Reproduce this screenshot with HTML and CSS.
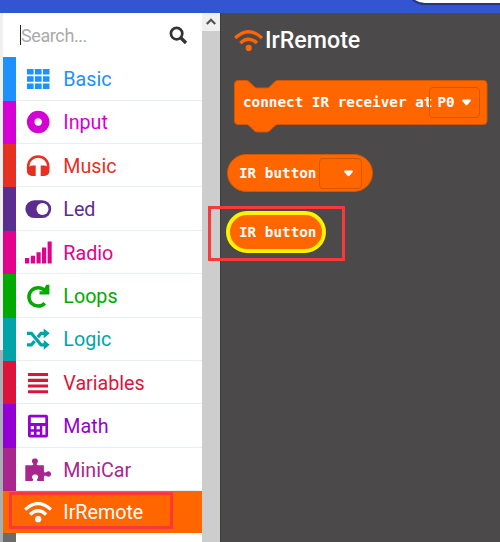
FILE: index.html
```html
<!DOCTYPE html>
<html lang="en">
<head>
<meta charset="utf-8">
<title>Blocks editor</title>
<link rel="stylesheet" href="styles.css">
</head>
<body>
<div class="app">
  <header class="topbar"><div class="pill"></div></header>
  <main class="editor">
    <div class="edge"></div>
    <nav class="toolbox">
      <div class="search">
        <span class="caret"></span><span class="placeholder">Search...</span>
        <svg class="search-icon" width="19" height="19" viewBox="0 0 19 19"><circle cx="7.6" cy="7.6" r="5.7" fill="none" stroke="#333" stroke-width="2.7"/><path d="M12 12l5 5" stroke="#333" stroke-width="3.4"/></svg>
      </div>
      <div class="row basic"><svg class="icon" viewBox="0 0 28 28"><path fill="currentColor" d="M3 4h6.6v5.5H3zM10.9 4h6.7v5.5h-6.7zM18.9 4h6.6v5.5h-6.6zM3 11.2h6.6v5.6H3zM10.9 11.2h6.7v5.6h-6.7zM18.9 11.2h6.6v5.6h-6.6zM3 18.5h6.6V24H3zM10.9 18.5h6.7V24h-6.7zM18.9 18.5h6.6V24h-6.6z"/></svg><span>Basic</span></div>
      <div class="row input"><svg class="icon" viewBox="0 0 28 28"><circle cx="14.2" cy="14" r="7.5" fill="none" stroke="currentColor" stroke-width="7.6"/></svg><span>Input</span></div>
      <div class="row music"><svg class="icon" viewBox="0 0 28 28"><path d="M4.1 17v-2.5a10.1 10.1 0 0 1 20.2 0V17" fill="none" stroke="currentColor" stroke-width="2.5"/><path fill="currentColor" d="M11.7 13.5v10.6H9.500c-4 0-6.600-2-6.600-5.300s2.600-5.300 6.600-5.300zM16.700 13.500v10.600h2.200c4 0 6.600-2 6.600-5.300s-2.600-5.300-6.600-5.300z"/></svg><span>Music</span></div>
      <div class="row led"><svg class="icon" viewBox="0 0 28 28"><rect x="1.4" y="5.2" width="25.8" height="17.8" rx="8.9" fill="currentColor"/><circle cx="18.5" cy="14.1" r="6" fill="#fff"/></svg><span>Led</span></div>
      <div class="row radio"><svg class="icon" viewBox="0 0 28 28"><path fill="currentColor" d="M1 19h4.2v5.5H1zM6.8 16.8H11v7.7H6.8zM12.5 13.3h4.2v11.2h-4.2zM18 8.500h4.200v16H18zM23.600 2.500h4.100v22h-4.100z"/></svg><span>Radio</span></div>
      <div class="row loops"><svg class="icon" viewBox="0 0 28 28"><path d="M20.7 8.4A9.2 9.2 0 1 0 20.8 21.2" fill="none" stroke="currentColor" stroke-width="3.5"/><path fill="currentColor" d="M22.2 2.7h3.2v9.7H15.5V9.2h3.3z"/></svg><span>Loops</span></div>
      <div class="row logic"><svg class="icon" viewBox="0 0 28 28"><path d="M3 8.3h4.400L17 19.800h4M3 19.800h4.400l3.200-3.800M13.800 12.100L17 8.300h4" fill="none" stroke="currentColor" stroke-width="3.2"/><path fill="currentColor" d="M19.700 3.500l6 4.800-6 4.900zM19.700 15l6 4.800-6 4.900z"/></svg><span>Logic</span></div>
      <div class="row variables"><svg class="icon" viewBox="0 0 28 28"><path fill="currentColor" d="M4 4h20v3.100H4zM4 9.800h20v3.100H4zM4 15.400h20v3.100H4zM4 21.200h20v3.100H4z"/></svg><span>Variables</span></div>
      <div class="row math"><svg class="icon" viewBox="0 0 28 28"><rect x="4" y="2.7" width="20" height="22.8" rx="2" fill="currentColor"/><path fill="#fff" d="M6.800 5.500h14.500v5.600H6.800zM6.800 14h3.100v3.200H6.800zM12.600 14h3.200v3.200h-3.200zM6.800 19.700h3.100v3.100H6.800zM12.600 19.700h3.200v3.100h-3.200zM18.300 14h3.100v8.800h-3.100z"/></svg><span>Math</span></div>
      <div class="row minicar"><svg class="icon" viewBox="0 0 28 28"><path fill="currentColor" d="M1.300 9.200h5.900c3.100 0 2.200-1.200 1.400-2.300C7 4.500 8.400 2.500 10.900 2.500s4 2 2.400 4.400c-.8 1.100-1.200 2.300 1.800 2.300h4.800v4.900c0 2.900 1 2.900 2.500 1.800 2.400-1.500 4.700-.1 4.700 2.100s-2.300 3.700-4.700 2.100c-1.500-1-2.500-.9-2.500 1.700V25h-6c-1.600-.5-.9-1.600-.2-2.600 1.400-2.300-.2-4-2.500-4s-4.200 1.700-2.700 4c.7 1 1.400 2.100-.2 2.600h-7z"/></svg><span>MiniCar</span></div>
      <div class="row irremote"><svg class="icon" viewBox="0 0 28 28"><path d="M1.2 11.6Q14 -.6 27 11.6M6.100 16.500Q14 8.900 22.200 16.500" fill="none" stroke="currentColor" stroke-width="3.3"/><circle cx="14.2" cy="21.2" r="3.100" fill="currentColor"/></svg><span>IrRemote</span><i class="callout row-callout"></i></div>
      <div class="row rest"></div>
    </nav>
    <div class="scrollbar"><div class="up"><svg width="18" height="18" viewBox="0 0 18 18"><path d="M4.800 11L9 6.800l4.200 4.200" fill="none" stroke="#555" stroke-width="2.3"/></svg></div></div>
    <section class="flyout">
      <h1 class="heading"><svg width="29" height="29" viewBox="0 0 28 28"><path d="M1.200 11.600Q14 -.6 27 11.600M6.100 16.500Q14 8.900 22.200 16.500" fill="none" stroke="currentColor" stroke-width="3.200"/><circle cx="14.200" cy="21.200" r="3" fill="currentColor"/></svg><span>IrRemote</span></h1>
      <div class="block statement">
        <svg class="shape" width="256" height="56" viewBox="0 0 256 56"><path d="M4 1.500H12c2 0 3 1 4 2l4 4c1 1 2 1.500 4 1.500H32c2 0 3-.5 4-1.500l4-4c1-1 2-2 4-2H249.500a3.500 3.500 0 0 1 3.500 3.500V42a3.500 3.500 0 0 1-3.500 3.500H44c-2 0-3 1-4 2l-4 4c-1 1-2 1.500-4 1.500H24c-2 0-3-.5-4-1.500l-4-4c-1-1-2-2-4-2H4A3.500 3.500 0 0 1 .5 42V5A3.500 3.500 0 0 1 4 1.500z" fill="#ff6600" stroke="#d65600"/></svg>
        <span class="code">connect IR receiver at</span>
        <span class="field port">P0<svg width="11" height="7" viewBox="0 0 11 7"><path d="M2 .5h7q1.600.2.7 1.500L6.300 6q-.8.700-1.600 0L1.300 2Q.4.700 2 .5z" fill="#fff"/></svg></span>
      </div>
      <div class="block reporter">
        <span class="code">IR button</span>
        <span class="field key"><svg width="11" height="7" viewBox="0 0 11 7"><path d="M2 .5h7q1.600.2.7 1.500L6.300 6q-.8.700-1.600 0L1.300 2Q.4.700 2 .5z" fill="#fff"/></svg></span>
      </div>
      <div class="block selected"><span class="code">IR button</span><i class="callout block-callout"></i></div>
    </section>
  </main>
</div>
</body>
</html>
```
FILE: styles.css
```css
* { box-sizing: border-box; }
body { margin: 0; font-family: Roboto, sans-serif; }
.app { width: 500px; height: 542px; overflow: hidden; display: flex; flex-direction: column; }
.topbar { height: 13px; background: #3454d1; display: flex; justify-content: flex-end; overflow: hidden; flex: none; }
.pill { width: 130px; height: 40px; margin: -35px -35px 0 0; border: 2px solid #22377f; border-radius: 20px; background: #fff; }
.editor { flex: 1; min-height: 0; display: grid; grid-template-columns: 3px 199px 18px 1fr; }
.edge { background: linear-gradient(#f0f0f0 337px, #a6afb3 337px); }
.toolbox { background: #fff; overflow: hidden; }
.search { height: 44.3px; display: flex; align-items: center; padding: 0 14px 0 17px; }
.caret { width: 1px; height: 20px; background: #222; }
.placeholder { color: #aaa; font-size: 18px; letter-spacing: -0.4px; flex: 1; }
.search-icon { margin-top: 1px; }
.row { position: relative; height: 43.4px; border-left: 13px solid var(--c); color: var(--c); display: flex; align-items: center; padding-left: 8px; font-size: 19.7px; background: linear-gradient(#e9eef0, #e9eef0) bottom / 100% 1px no-repeat; }
.row span { padding-top: 1px; }
.icon { width: 28px; height: 28px; margin-right: 11.3px; flex: none; }
.basic { --c: #1e90ff; }
.input { --c: #d400d4; }
.music { --c: #e63022; }
.led { --c: #5c2d91; }
.radio { --c: #e3008c; }
.loops { --c: #00aa00; }
.logic { --c: #00a4a6; }
.variables { --c: #dc143c; }
.math { --c: #9400d3; }
.minicar { --c: #a9278d; }
.irremote { --c: #ff6600; background: #ff6600; height: 42px; }
.irremote span, .irremote .icon { color: #fff; }
.rest { --c: #6b6b6b; background: none; }
.callout { position: absolute; border: 3px solid #fb3838; }
.row-callout { left: -7px; top: 1px; width: 164px; height: 37px; }
.scrollbar { background: #cdcdcd; }
.up { height: 18px; background: #f0f0f0; }
.up svg { display: block; }
.flyout { background: #4b4949; border-left: 1px solid #3d3c3c; padding: 13px 0 0 13px; }
.heading { margin: 0; height: 28px; display: flex; align-items: center; color: #ff6600; font-size: 23.2px; font-weight: 500; }
.heading span { color: #fff; margin-left: 2px; }
.block { display: flex; align-items: center; position: relative; }
.code { color: #fff; font: bold 14.3px/20px "DejaVu Sans Mono", monospace; white-space: pre; }
.statement { width: 254px; height: 46px; margin-top: 25px; padding-left: 9px; }
.shape { position: absolute; left: 0; top: 0; }
.statement .code, .statement .field { position: relative; }
.field { border: 1px solid #d65600; border-radius: 4px; height: 31px; display: flex; align-items: center; color: #fff; font: bold 14.3px/20px "DejaVu Sans Mono", monospace; }
.port { width: 51px; margin-left: -3px; padding-left: 7px; gap: 6px; }
.reporter { width: 146px; height: 38px; margin: 29px 0 0 -7px; padding-left: 11px; background: #ff6600; border: 1px solid #d65600; border-radius: 19px; }
.key { width: 43px; margin-left: 3px; padding-left: 23px; }
.selected { width: 100px; height: 42px; margin: 19px 0 0 -8px; padding-left: 9px; background: #ff6600; border: 4px solid #fff200; border-radius: 21px; }
.block-callout { left: -22px; top: -9px; width: 137px; height: 55px; }
```
